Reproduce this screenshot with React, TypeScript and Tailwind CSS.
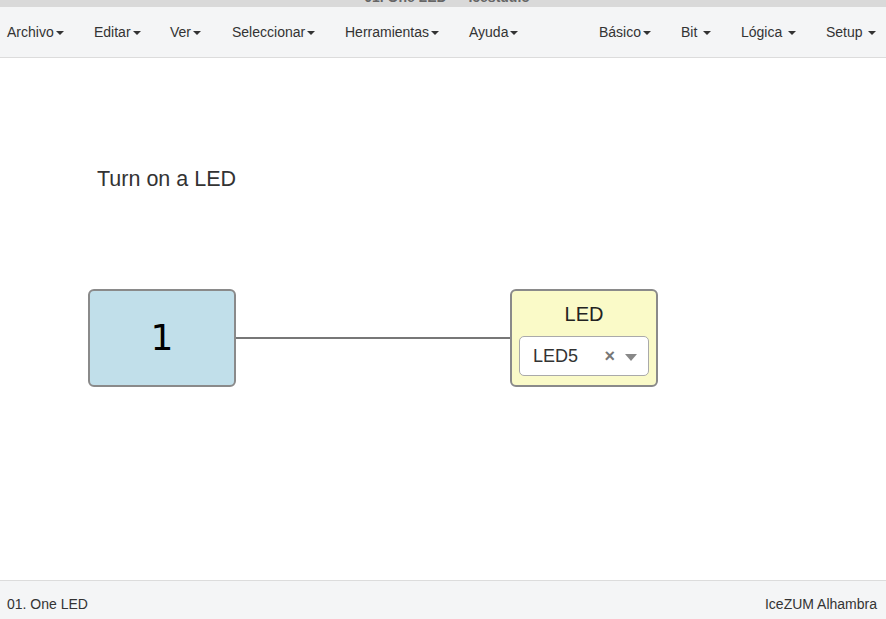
import React from 'react';

const leftMenu = [
  { label: 'Archivo', w: 'w-[87px]', sp: false },
  { label: 'Editar', w: 'w-[76px]', sp: false },
  { label: 'Ver', w: 'w-[62px]', sp: false },
  { label: 'Seleccionar', w: 'w-[113px]', sp: false },
  { label: 'Herramientas', w: 'w-[124px]', sp: false },
  { label: 'Ayuda', w: 'w-[60px]', sp: false },
];

const rightMenu = [
  { label: 'Básico', w: 'w-[82px]', sp: false },
  { label: 'Bit', w: 'w-[60px]', sp: true },
  { label: 'Lógica', w: 'w-[85px]', sp: true },
  { label: 'Setup', w: 'w-[60px]', sp: true },
];

function Caret() {
  return (
    <span className="inline-block w-0 h-0 ml-[2px] align-middle border-l-[4px] border-r-[4px] border-t-[4px] border-l-transparent border-r-transparent border-t-[#333]" />
  );
}

function MenuItem({ label, w, sp }: { label: string; w: string; sp: boolean }) {
  return (
    <div className={`${w} shrink-0 whitespace-nowrap`}>
      {label}
      {sp && <span> </span>}
      <Caret />
    </div>
  );
}

export default function App() {
  return (
    <div className="w-[886px] h-[619px] flex flex-col bg-white overflow-hidden font-['Liberation_Sans',Arial,sans-serif] text-[#333]">
      <div className="h-[7px] bg-[#d9d9d9] overflow-hidden relative shrink-0">
        <div className="absolute left-0 right-0 top-[-13px] text-center text-[14px] font-bold text-[#666] pl-[8px]">
          01. One LED — Icestudio
        </div>
      </div>
      <div className="h-[51px] shrink-0 bg-[#f4f5f6] border-b border-[#dcdcdc] flex items-center text-[14px] pl-[7px]">
        {leftMenu.map((m) => (
          <MenuItem key={m.label} {...m} />
        ))}
        <div className="flex-1" />
        {rightMenu.map((m) => (
          <MenuItem key={m.label} {...m} />
        ))}
      </div>
      <div className="flex-1 relative">
        <div className="absolute left-[97px] top-[105px] text-[21.5px] text-[#333]">Turn on a LED</div>
        <div className="absolute left-[236px] top-[279px] w-[274px] h-[2px] bg-[#777]" />
        <div className="absolute left-[88px] top-[231px] w-[148px] h-[98px] rounded-[6px] border-2 border-[#8a8a8a] bg-[#c1dfea] flex items-center justify-center">
          <span className="text-[36px] text-black font-['DejaVu_Sans',sans-serif] leading-none">1</span>
        </div>
        <div className="absolute left-[510px] top-[231px] w-[148px] h-[98px] rounded-[6px] border-2 border-[#8a8a8a] bg-[#fafac8] flex flex-col items-center">
          <div className="text-[20px] text-[#222] mt-[11px] leading-[24px]">LED</div>
          <div className="mt-[10px] w-[130px] h-[40px] bg-white border border-[#aaa] rounded-[5px] flex items-center pl-[13px] pr-[11px]">
            <span className="text-[18px] text-[#333] flex-1">LED5</span>
            <span className="text-[18px] font-bold text-[#777] leading-none mr-[10px]">×</span>
            <span className="inline-block w-0 h-0 border-l-[6px] border-r-[6px] border-t-[7px] border-l-transparent border-r-transparent border-t-[#888] mt-[3px]" />
          </div>
        </div>
      </div>
      <div className="h-[39px] shrink-0 bg-[#f4f5f6] border-t border-[#dcdcdc] flex items-center justify-between pl-[7px] pr-[9px] pt-[8px] text-[14px] text-[#333]">
        <span>01. One LED</span>
        <span>IceZUM Alhambra</span>
      </div>
    </div>
  );
}
